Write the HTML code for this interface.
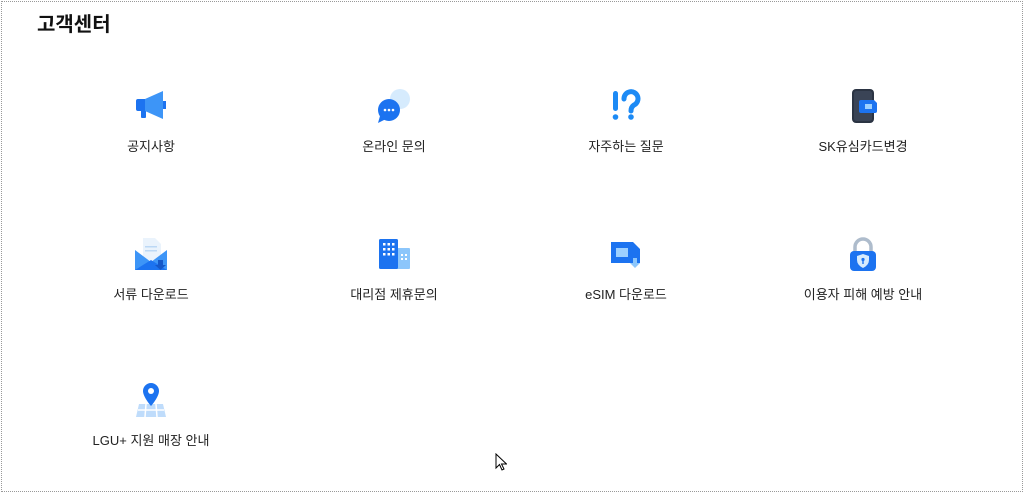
<!DOCTYPE html>
<html><head><meta charset="utf-8"><style>
body{margin:0;width:1024px;height:493px;background:#fff;font-family:"Liberation Sans","Noto Sans CJK KR",sans-serif;overflow:hidden;position:relative}
.frame{position:absolute;left:1px;top:1px;width:1020px;height:489px;border:1px dotted #999}
h1{position:absolute;left:37px;top:8px;margin:0;font-size:20px;font-weight:bold;color:#111}
.it{position:absolute;width:200px;text-align:center}
.it svg{display:block;margin:0 auto}
.it span{display:block;margin-top:12px;font-size:13px;color:#222}
</style></head><body>
<div class="frame"></div>
<h1>고객센터</h1>

<div class="it" style="left:51px;top:88px"><svg width="36" height="36" viewBox="0 0 36 36"><rect x="3" y="11" width="11" height="12" rx="2" fill="#1c73f0"/><rect x="8" y="22" width="5" height="8" rx="1" fill="#1c73f0"/><path d="M12 11 L30 3 V31 L12 23Z" fill="#3d95f7"/><rect x="30" y="13" width="3" height="8" fill="#1c73f0"/></svg><span>공지사항</span></div>

<div class="it" style="left:294px;top:88px"><svg width="40" height="36" viewBox="0 0 40 36"><circle cx="26" cy="11" r="10" fill="#d6ebfd"/><circle cx="15" cy="22" r="11" fill="#1c73f0"/><path d="M6 28 L4 35 L12 31Z" fill="#1c73f0"/><circle cx="11" cy="22" r="1.3" fill="#fff"/><circle cx="15" cy="22" r="1.3" fill="#fff"/><circle cx="19" cy="22" r="1.3" fill="#fff"/></svg><span>온라인 문의</span></div>

<div class="it" style="left:526px;top:88px"><svg width="36" height="36" viewBox="0 0 36 36"><rect x="5" y="3" width="5" height="20" rx="2.5" fill="#1c8af5"/><circle cx="7.5" cy="29" r="2.8" fill="#1c8af5"/><path d="M16 11 a7 7 0 1 1 10 6 q-3 2 -3 6" stroke="#1c8af5" stroke-width="5" fill="none" stroke-linecap="round"/><circle cx="23" cy="29" r="2.8" fill="#1c8af5"/></svg><span>자주하는 질문</span></div>

<div class="it" style="left:763px;top:88px"><svg width="36" height="36" viewBox="0 0 36 36"><rect x="7" y="1" width="22" height="34" rx="4" fill="#2b3443"/><rect x="9" y="3" width="18" height="30" rx="2.5" fill="#3a4456"/><path d="M16 12 h13 l3 3 v8 a2 2 0 0 1-2 2 h-14 a2 2 0 0 1 -2-2 v-9 a2 2 0 0 1 2-2z" fill="#1c73f0"/><rect x="20" y="16" width="7" height="5" fill="#9dd0ff"/></svg><span>SK유심카드변경</span></div>

<div class="it" style="left:51px;top:236px"><svg width="36" height="36" viewBox="0 0 36 36"><path d="M10 2 h12 l6 6 v16 h-18z" fill="#eaf3fc"/><rect x="12" y="10" width="12" height="1.5" fill="#bcd8f5"/><rect x="12" y="14" width="12" height="1.5" fill="#bcd8f5"/><path d="M2 14 L18 26 L34 14 V34 H2Z" fill="#3d95f7"/><path d="M2 34 L18 24 L34 34Z" fill="#1c73f0"/><path d="M25 24 h5 v5 h3 l-5.5 5 l-5.5-5 h3z" fill="#1558c9"/></svg><span>서류 다운로드</span></div>

<div class="it" style="left:294px;top:236px"><svg width="36" height="36" viewBox="0 0 36 36"><rect x="19" y="12" width="15" height="21" rx="1" fill="#8cc6fb"/><rect x="3" y="3" width="19" height="30" rx="1.5" fill="#1c73f0"/><g fill="#fff"><rect x="7" y="7" width="2.5" height="2.5"/><rect x="11.5" y="7" width="2.5" height="2.5"/><rect x="16" y="7" width="2.5" height="2.5"/><rect x="7" y="12" width="2.5" height="2.5"/><rect x="11.5" y="12" width="2.5" height="2.5"/><rect x="16" y="12" width="2.5" height="2.5"/><rect x="7" y="17" width="2.5" height="2.5"/><rect x="11.5" y="17" width="2.5" height="2.5"/><rect x="16" y="17" width="2.5" height="2.5"/><rect x="25" y="18" width="2" height="2"/><rect x="29" y="18" width="2" height="2"/><rect x="25" y="22" width="2" height="2"/><rect x="29" y="22" width="2" height="2"/></g></svg><span>대리점 제휴문의</span></div>

<div class="it" style="left:526px;top:236px"><svg width="36" height="36" viewBox="0 0 36 36"><path d="M3 6 h22 l7 7 v14 h-29z" fill="#1c73f0"/><rect x="8" y="12" width="12" height="9" fill="#9dd0ff"/><path d="M25 22 h4 v5 h3 l-5 5 l-5-5 h3z" fill="#8cc6fb"/></svg><span>eSIM 다운로드</span></div>

<div class="it" style="left:763px;top:236px"><svg width="36" height="36" viewBox="0 0 36 36"><path d="M10 16 v-5 a8 8 0 0 1 16 0 v5" stroke="#aebccc" stroke-width="3.5" fill="none"/><rect x="5" y="15" width="26" height="20" rx="4" fill="#1c73f0"/><path d="M18 18 l6 2 v4 q0 5 -6 8 q-6 -3 -6 -8 v-4z" fill="#d6ebfd"/><circle cx="18" cy="23.5" r="1.6" fill="#1c73f0"/><rect x="17.3" y="24" width="1.4" height="4" fill="#1c73f0"/></svg><span>이용자 피해 예방 안내</span></div>

<div class="it" style="left:51px;top:382px"><svg width="36" height="36" viewBox="0 0 36 36"><path d="M6 22 h24 l3 13 h-30z" fill="#bfdcfb"/><path d="M13 22 l-1 13 M23 22 l1 13 M5 28 h26" stroke="#fff" stroke-width="1.5"/><path d="M18 1 a8 8 0 0 1 8 8 c0 6 -8 15 -8 15 c0 0 -8 -9 -8 -15 a8 8 0 0 1 8 -8z" fill="#1c73f0"/><circle cx="18" cy="9" r="3" fill="#fff"/></svg><span>LGU+ 지원 매장 안내</span></div>

<svg style="position:absolute;left:495px;top:453px" width="12" height="18" viewBox="0 0 12 18"><path d="M1 1 v14 l3.5-3.5 l2.5 5.5 l2-1 l-2.5-5 h5z" fill="#fff" stroke="#000" stroke-width="1"/></svg>
</body></html>
